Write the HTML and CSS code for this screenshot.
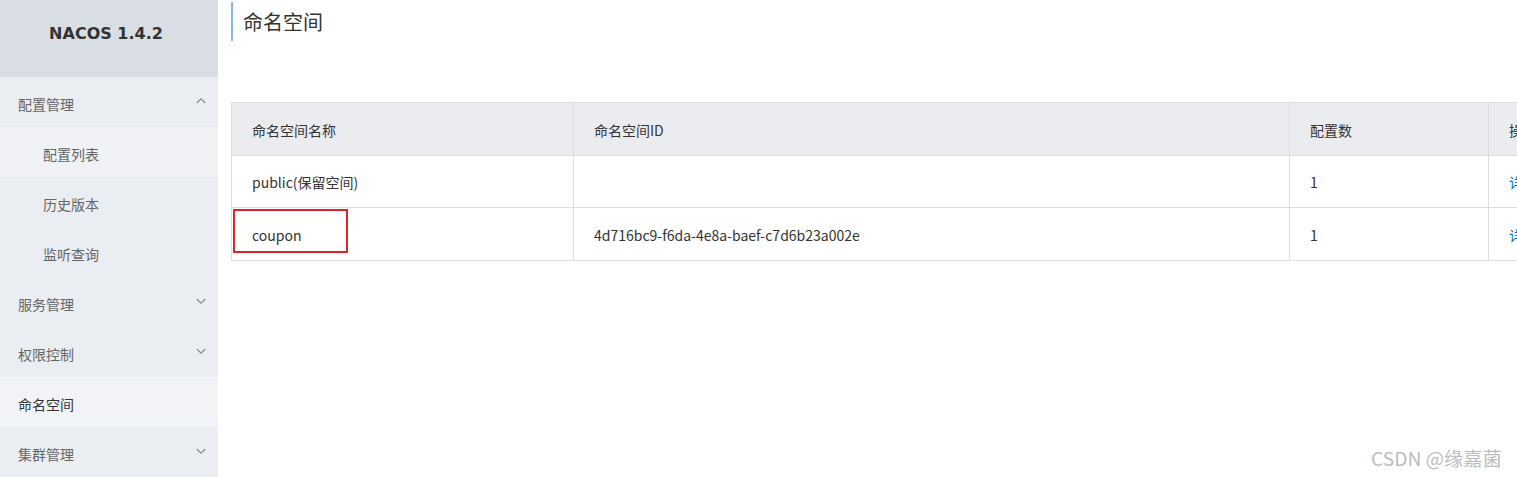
FILE: index.html
```html
<!DOCTYPE html>
<html lang="zh-CN">
<head>
<meta charset="utf-8">
<title>NACOS</title>
<link rel="stylesheet" href="styles.css">
</head>
<body>
<div class="app">
  <aside class="sidebar">
    <div class="brand">NACOS 1.4.2</div>
    <ul class="menu">
      <li class="item top"><span>配置管理</span><svg class="chev" viewBox="0 0 12 8"><path d="M1 7 L6 2 L11 7" /></svg></li>
      <li class="item sub light"><span>配置列表</span></li>
      <li class="item sub"><span>历史版本</span></li>
      <li class="item sub"><span>监听查询</span></li>
      <li class="item top"><span>服务管理</span><svg class="chev" viewBox="0 0 12 8"><path d="M1 1 L6 6 L11 1" /></svg></li>
      <li class="item top"><span>权限控制</span><svg class="chev" viewBox="0 0 12 8"><path d="M1 1 L6 6 L11 1" /></svg></li>
      <li class="item top active"><span>命名空间</span></li>
      <li class="item top"><span>集群管理</span><svg class="chev" viewBox="0 0 12 8"><path d="M1 1 L6 6 L11 1" /></svg></li>
    </ul>
  </aside>
  <main class="main">
    <h1 class="title">命名空间</h1>
    <div class="table-wrap">
      <table class="table">
        <thead>
          <tr><th class="c1">命名空间名称</th><th class="c2">命名空间ID</th><th class="c3">配置数</th><th class="c4">操作</th></tr>
        </thead>
        <tbody>
          <tr><td>public(保留空间)</td><td></td><td>1</td><td class="link">详情</td></tr>
          <tr><td class="mark-cell"><span class="mark"></span>coupon</td><td>4d716bc9-f6da-4e8a-baef-c7d6b23a002e</td><td>1</td><td class="link">详情</td></tr>
        </tbody>
      </table>
    </div>
  </main>
</div>
<div class="watermark">CSDN @缘嘉菌</div>
</body>
</html>
```
FILE: styles.css
```css
html, body {
  margin: 0;
  padding: 0;
  width: 1517px;
  height: 477px;
  overflow: hidden;
  background: #fff;
  font-family: "Noto Sans CJK SC", "Noto Sans", sans-serif;
  color: #333;
}
.app {
  display: flex;
  height: 477px;
}
.sidebar {
  width: 218px;
  flex: 0 0 218px;
  background: #eaedf1;
}
.brand {
  height: 77px;
  background: #d9dee4;
  display: flex;
  align-items: center;
  justify-content: center;
  font-family: "DejaVu Sans", sans-serif;
  font-weight: bold;
  font-size: 16px;
  color: #333;
  padding-bottom: 10px;
  padding-right: 6px;
  box-sizing: border-box;
}
.menu {
  list-style: none;
  margin: 0;
  padding: 0;
}
.item {
  height: 50px;
  display: flex;
  align-items: center;
  justify-content: space-between;
  font-size: 14px;
  color: #666;
  box-sizing: border-box;
  padding-right: 12px;
  padding-top: 3px;
}
.item.top { padding-left: 18px; }
.item.sub { padding-left: 43px; }
.item.light { background: #eff1f5; }
.item.active { background: #f2f3f7; color: #333; }
.chev {
  width: 10px;
  height: 7px;
  fill: none;
  stroke: #888;
  stroke-width: 1.3;
  margin-top: -5px;
}
.item.top:first-child .chev { margin-top: -7px; }
.main {
  flex: 1;
  padding-left: 13px;
  min-width: 0;
}
.title {
  margin: 2px 0 0 0;
  height: 39px;
  border-left: 2px solid #88b7e0;
  padding-left: 10px;
  font-size: 20px;
  font-weight: normal;
  line-height: 39px;
  color: #333;
  box-sizing: border-box;
}
.table-wrap {
  margin-top: 61px;
  width: 1500px;
}
.table {
  border-collapse: collapse;
  table-layout: fixed;
  width: 1460px;
  font-size: 14px;
}
.table th, .table td {
  border: 1px solid #dcdee3;
  height: 52.5px;
  padding: 2px 0 0 20px;
  text-align: left;
  font-weight: normal;
  color: #333;
  box-sizing: border-box;
}
.table th {
  background: #ebecf0;
}
.c1 { width: 342px; }
.c2 { width: 716px; }
.c3 { width: 199px; }
.c4 { width: 203px; }
.table td.link { color: #0070cc; }
.mark-cell { position: relative; }
.mark {
  position: absolute;
  left: 1px;
  top: 1px;
  width: 115px;
  height: 44px;
  border: 2px solid #e1242c;
  box-sizing: border-box;
}
.watermark {
  position: absolute;
  left: 1371px;
  top: 444px;
  font-size: 19.3px;
  color: #bdbdbd;
  font-family: "Noto Sans CJK SC", sans-serif;
}
```
